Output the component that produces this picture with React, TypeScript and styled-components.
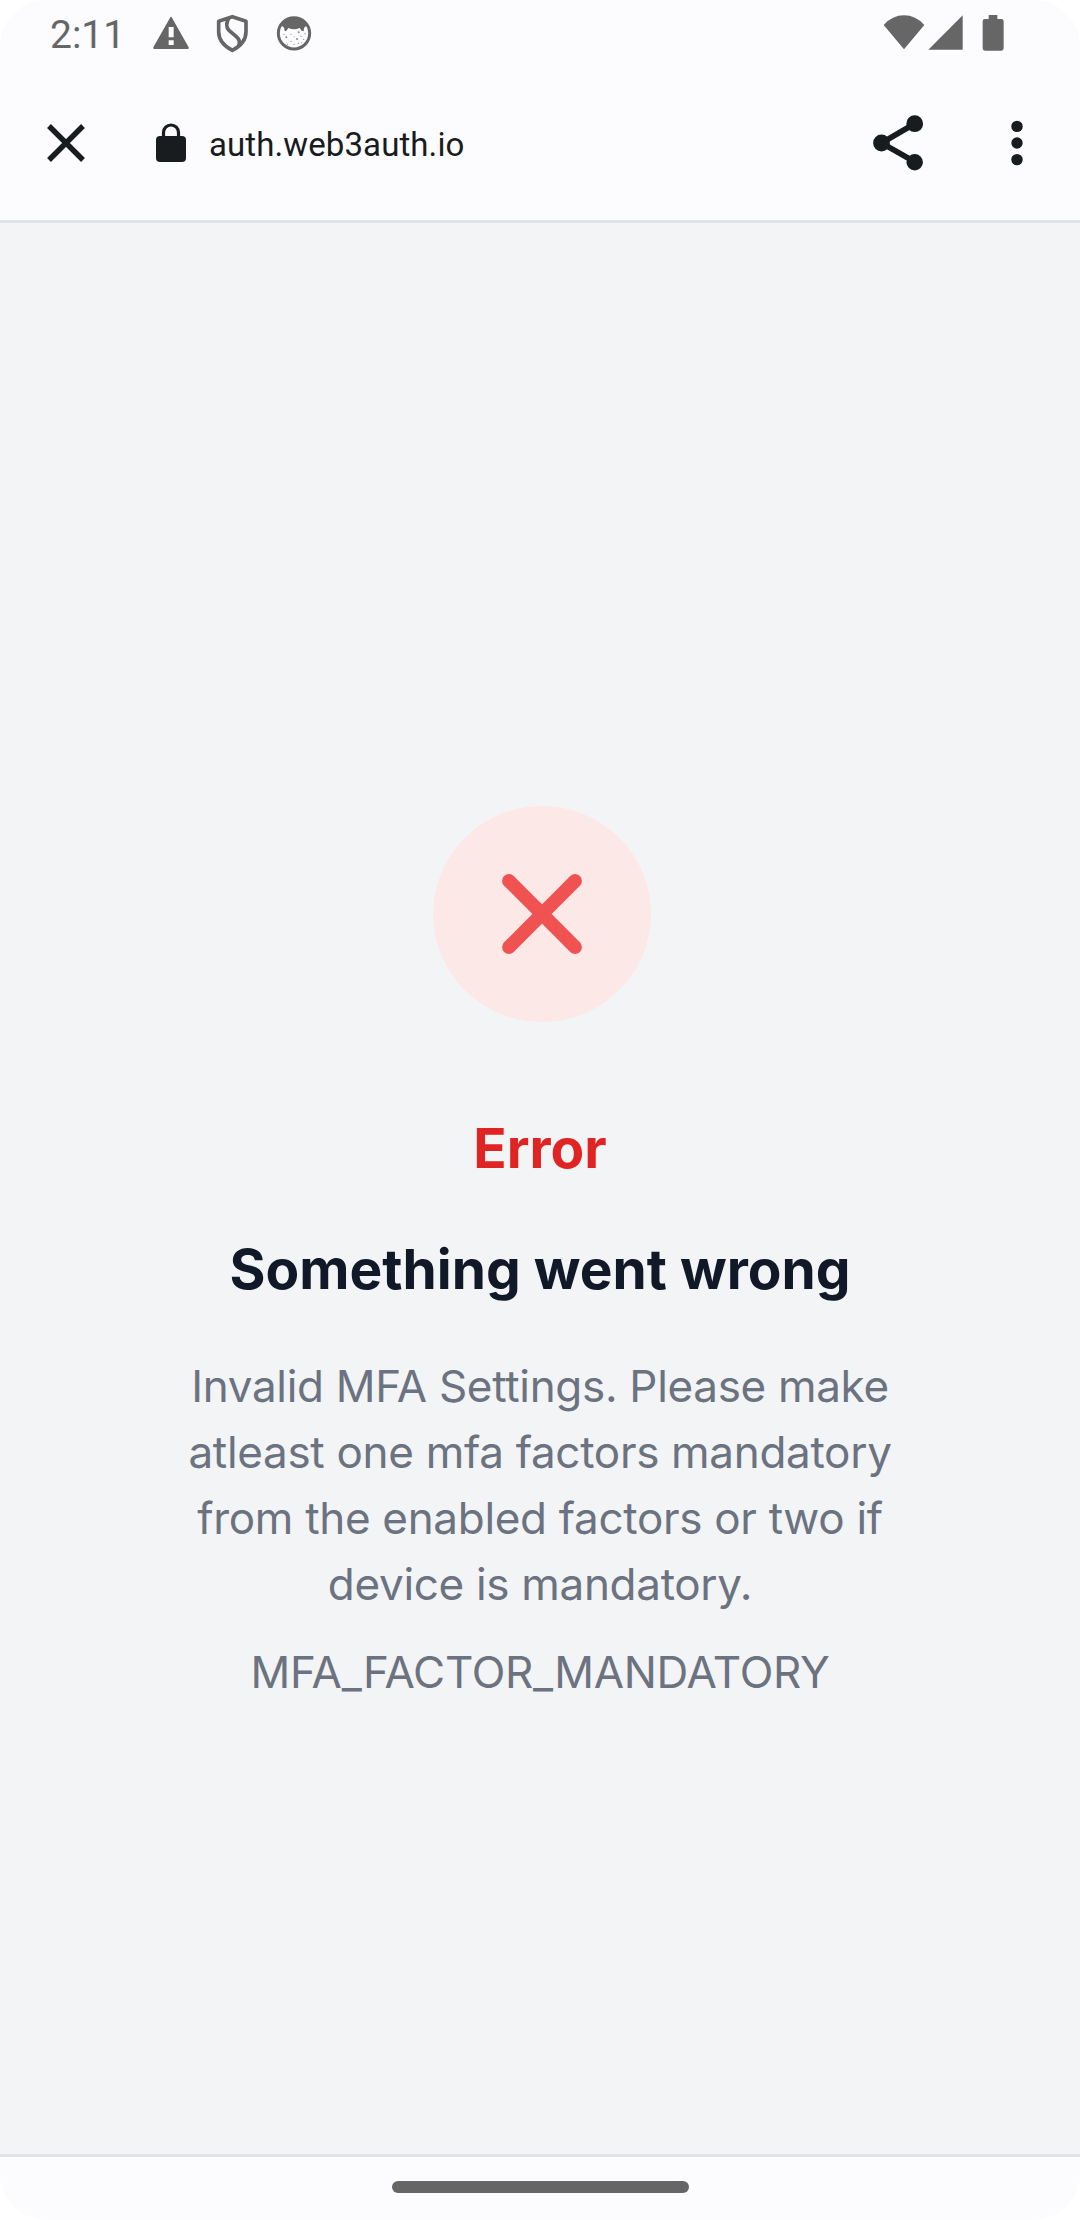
import React from "react";
import styled, { createGlobalStyle } from "styled-components";

const GlobalStyle = createGlobalStyle`
  *, *::before, *::after { box-sizing: border-box; }
  body { margin: 0; background: #ffffff; }
`;

const SYSTEM_GRAY = "#666666";
const INK = "#191c1e";

const Screen = styled.div`
  width: 1080px;
  height: 2220px;
  display: flex;
  flex-direction: column;
  overflow: hidden;
  border-radius: 46px;
  background: #fcfcff;
`;

const StatusBar = styled.header`
  height: 66px;
  flex: none;
  display: flex;
  justify-content: space-between;
  align-items: flex-start;
  padding: 14px 76px 0 50px;
  color: ${SYSTEM_GRAY};
`;

const StatusGroup = styled.div`
  display: flex;
  align-items: flex-start;
`;

const Clock = styled.time`
  width: 102px;
  margin-top: 1px;
  font: 400 39px/40px Roboto, sans-serif;
`;

const Glyph = styled.svg<{ $gap?: number }>`
  display: block;
  flex: none;
  margin-left: ${({ $gap = 0 }) => $gap}px;
`;

const Toolbar = styled.nav`
  height: 157px;
  flex: none;
  display: flex;
  align-items: center;
  padding: 0 57px 1px 46px;
  border-bottom: 3px solid #dde3e9;
  color: ${INK};
`;

const IconButton = styled.button<{ $gap?: number }>`
  display: flex;
  flex: none;
  margin: 0 0 0 ${({ $gap = 0 }) => $gap}px;
  padding: 0;
  border: 0;
  background: none;
  color: inherit;
`;

const Address = styled.div`
  flex: 1;
  display: flex;
  align-items: center;
  margin-left: 69px;
`;

const Host = styled.span`
  margin: 4px 0 0 22px;
  font: 400 33px/40px Roboto, sans-serif;
  letter-spacing: 0.1px;
`;

const Content = styled.main`
  flex: 1;
  display: flex;
  flex-direction: column;
  align-items: center;
  padding-top: 583px;
  background: #f3f4f6;
  font-family: Inter, sans-serif;
  text-align: center;
`;

const ErrorBadge = styled.div`
  width: 218px;
  height: 216px;
  display: flex;
  align-items: center;
  justify-content: center;
  margin: 0 0 88px 4px;
  border-radius: 50%;
  background: #fde8e8;
`;

const Title = styled.h1<{ $color: string }>`
  margin: 0 0 44px;
  font-size: 55px;
  line-height: 77px;
  font-weight: 700;
  color: ${({ $color }) => $color};
`;

const Details = styled.section`
  padding-top: 1px;
`;

const Message = styled.p`
  width: 724px;
  margin: 0 0 22px;
  font-size: 44px;
  line-height: 66px;
  letter-spacing: -0.31px;
  color: #6b7280;
`;

const GestureBar = styled.footer`
  height: 66px;
  flex: none;
  display: flex;
  justify-content: center;
  padding-top: 24px;
  border-top: 3px solid #dde3e9;
`;

const GestureHandle = styled.div`
  width: 297px;
  height: 12px;
  border-radius: 6px;
  background: ${SYSTEM_GRAY};
`;

const WarningIcon = () => (
  <Glyph width="38" height="40" viewBox="0 0 114 120" fill="currentColor">
    <path
      fillRule="evenodd"
      d="M55 10q2-4 4 0l51 90q2 5-3 5H7q-5 0-3-5zM50 39v31h15V39zM50 79v14h15V79z"
    />
  </Glyph>
);

const ShieldIcon = () => (
  <Glyph $gap={26} width="34" height="40" viewBox="0 0 102 120" fill="none" stroke="currentColor" strokeWidth="11" strokeLinejoin="round">
    <path d="M49 8 90 22V53C90 80 72 97 49 109 26 97 8 80 8 53V22z" />
    <path d="M38 13C31 26 29 39 39 49L61 68C73 78 72 88 67 97" />
  </Glyph>
);

const CatIcon = () => (
  <Glyph $gap={25} width="38" height="40" viewBox="0 0 114 120">
    <circle cx="57" cy="58" r="47" fill="none" stroke="currentColor" strokeWidth="9" />
    <path
      fill="currentColor"
      d="M16 33Q30 9 57 9T98 33L91 38Q86 40 86 52L80 50 74 42Q65 46 57 46T40 42L33 52 29 50Q29 40 22 37z"
    />
    <g fill="currentColor" opacity="0.75">
      {[[34, 70, 3], [71, 55, 3], [66, 75, 3], [48, 61, 1.8], [48, 82, 2], [57, 91, 2], [78, 67, 2], [86, 76, 2], [27, 61, 1.8], [90, 59, 2], [38, 91, 1.8], [70, 88, 2], [57, 68, 1.5], [80, 86, 1.6]].map(
        ([x, y, r]) => (
          <circle key={`${x}-${y}`} cx={x} cy={y} r={r} />
        ),
      )}
    </g>
  </Glyph>
);

const WifiIcon = () => (
  <Glyph width="42" height="40" viewBox="0 0 126 120" fill="currentColor">
    <path d="M2 33Q28 4 63 4T124 33L63 106z" />
  </Glyph>
);

const SignalIcon = () => (
  <Glyph $gap={3} width="35" height="40" viewBox="0 0 105 120" fill="currentColor">
    <path d="M104 4V107H1z" />
  </Glyph>
);

const BatteryIcon = () => (
  <Glyph $gap={19} width="22" height="40" viewBox="0 0 66 120" fill="currentColor">
    <path d="M20 3H46V15H58Q65 15 65 22V103Q65 110 58 110H9Q2 110 2 103V22Q2 15 9 15H20z" />
  </Glyph>
);

const CloseIcon = () => (
  <Glyph width="40" height="40" viewBox="0 0 40 40" stroke="currentColor" strokeWidth="5.4">
    <path d="M3 3 37 37M37 3 3 37" />
  </Glyph>
);

const LockIcon = () => (
  <Glyph width="32" height="40" viewBox="0 0 32 40">
    <rect x="1" y="13" width="30" height="26" rx="4" fill="currentColor" />
    <path d="M8.5 15V9.5a7.5 7.5 0 0 1 15 0V15" fill="none" stroke="currentColor" strokeWidth="3.2" />
  </Glyph>
);

const ShareIcon = () => (
  <Glyph width="52" height="58" viewBox="0 0 52 58" fill="currentColor">
    <path d="M43 9.5 9.5 29 43 48" fill="none" stroke="currentColor" strokeWidth="5.6" />
    <circle cx="9.5" cy="29" r="8.4" />
    <circle cx="42.7" cy="9.7" r="8.4" />
    <circle cx="42.7" cy="48.2" r="8.2" />
  </Glyph>
);

const MoreIcon = () => (
  <Glyph width="12" height="46" viewBox="0 0 12 46" fill="currentColor">
    <circle cx="6" cy="6.4" r="5.7" />
    <circle cx="6" cy="23" r="5.7" />
    <circle cx="6" cy="39.6" r="5.7" />
  </Glyph>
);

const CrossIcon = () => (
  <Glyph width="80" height="80" viewBox="0 0 80 80" stroke="#f05252" strokeWidth="13.6" strokeLinecap="round">
    <path d="M6.9 6.9 73.1 73.1M73.1 6.9 6.9 73.1" />
  </Glyph>
);

export default function App() {
  return (
    <>
      <GlobalStyle />
      <Screen>
        <StatusBar>
          <StatusGroup>
            <Clock>2:11</Clock>
            <WarningIcon />
            <ShieldIcon />
            <CatIcon />
          </StatusGroup>
          <StatusGroup>
            <WifiIcon />
            <SignalIcon />
            <BatteryIcon />
          </StatusGroup>
        </StatusBar>
        <Toolbar>
          <IconButton aria-label="Close">
            <CloseIcon />
          </IconButton>
          <Address>
            <LockIcon />
            <Host>auth.web3auth.io</Host>
          </Address>
          <IconButton aria-label="Share">
            <ShareIcon />
          </IconButton>
          <IconButton aria-label="More" $gap={87}>
            <MoreIcon />
          </IconButton>
        </Toolbar>
        <Content>
          <ErrorBadge>
            <CrossIcon />
          </ErrorBadge>
          <Title $color="#e02424">Error</Title>
          <Title $color="#111928">Something went wrong</Title>
          <Details>
            <Message>
              Invalid MFA Settings. Please make atleast one mfa factors mandatory from the enabled factors or two if
              device is mandatory.
            </Message>
            <Message>MFA_FACTOR_MANDATORY</Message>
          </Details>
        </Content>
        <GestureBar>
          <GestureHandle />
        </GestureBar>
      </Screen>
    </>
  );
}
